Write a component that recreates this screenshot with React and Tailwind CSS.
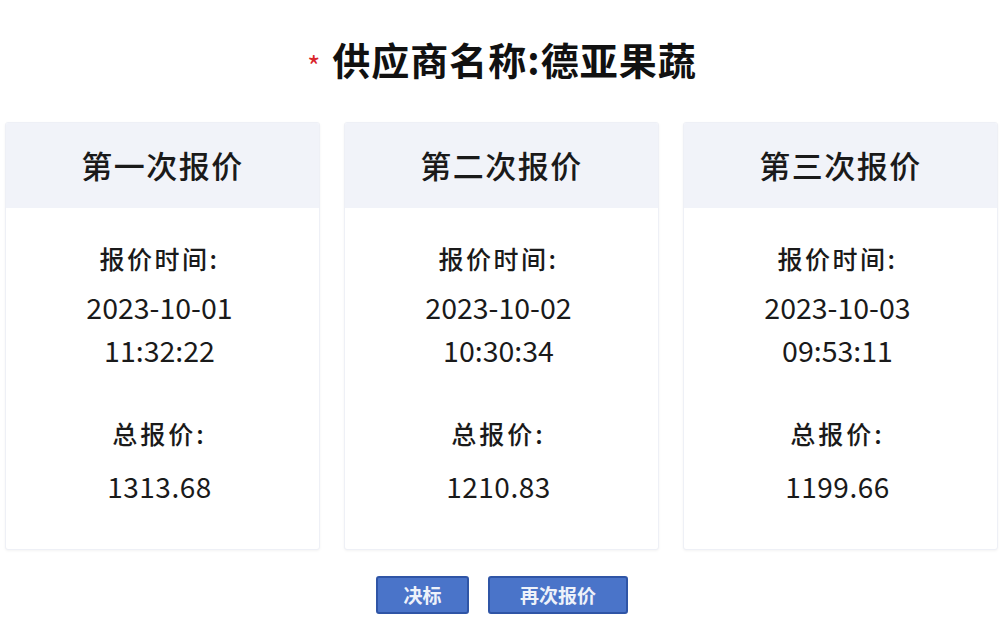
import React from "react";

const quotes = [
  { title: "第一次报价", date: "2023-10-01", time: "11:32:22", total: "1313.68" },
  { title: "第二次报价", date: "2023-10-02", time: "10:30:34", total: "1210.83" },
  { title: "第三次报价", date: "2023-10-03", time: "09:53:11", total: "1199.66" },
];

const QuoteCard = ({ quote }) => (
  <div className="w-[315px] flex flex-col rounded-[3px] border border-[#eef0f6] bg-white shadow-[0_1px_3px_rgba(0,0,0,0.05)] overflow-hidden">
    <div className="h-[85px] bg-[#f1f3f9] flex items-center justify-center">
      <span className="text-[31px] font-medium text-[#1a1a1a] tracking-[1.5px]">{quote.title}</span>
    </div>
    <div className="h-[341px] flex flex-col items-center text-[#1a1a1a] pr-[6px]">
      <div className="mt-[34px] text-[25px] font-medium leading-[32px] tracking-[2.5px]">报价时间:</div>
      <div className="mt-[11px] text-[28.5px] leading-[43px]">{quote.date}</div>
      <div className="text-[28.5px] leading-[43px]">{quote.time}</div>
      <div className="mt-[46px] text-[25px] font-medium leading-[32px] tracking-[3px]">总报价:</div>
      <div className="mt-[19px] text-[28px] leading-[36px] tracking-[0.5px]">{quote.total}</div>
    </div>
  </div>
);

const App = () => {
  return (
    <div
      className="w-[1000px] h-[641px] bg-white flex flex-col"
      style={{ fontFamily: '"Noto Sans CJK SC", "Noto Sans", sans-serif' }}
    >
      <div className="h-[122px] flex items-start justify-center pt-[36px] pl-[4px]">
        <span className="text-[#d9252b] text-[28px] leading-[46px] mr-[12px] mt-[6px]">*</span>
        <h1 className="text-[38px] font-bold leading-[46px] text-[#111] tracking-[1px]">供应商名称:德亚果蔬</h1>
      </div>
      <div className="flex gap-[24px] pl-[5px]">
        {quotes.map((q) => (
          <QuoteCard key={q.title} quote={q} />
        ))}
      </div>
      <div className="flex justify-center gap-[19px] mt-[26px] pl-[4px]">
        <button className="w-[93px] h-[38px] rounded-[3px] bg-[#4a74c9] border-2 border-[#2f55a6] text-[#eef2fa] text-[19px] font-bold">
          决标
        </button>
        <button className="w-[140px] h-[38px] rounded-[3px] bg-[#4a74c9] border-2 border-[#2f55a6] text-[#eef2fa] text-[19px] font-bold">
          再次报价
        </button>
      </div>
    </div>
  );
};

export default App;
